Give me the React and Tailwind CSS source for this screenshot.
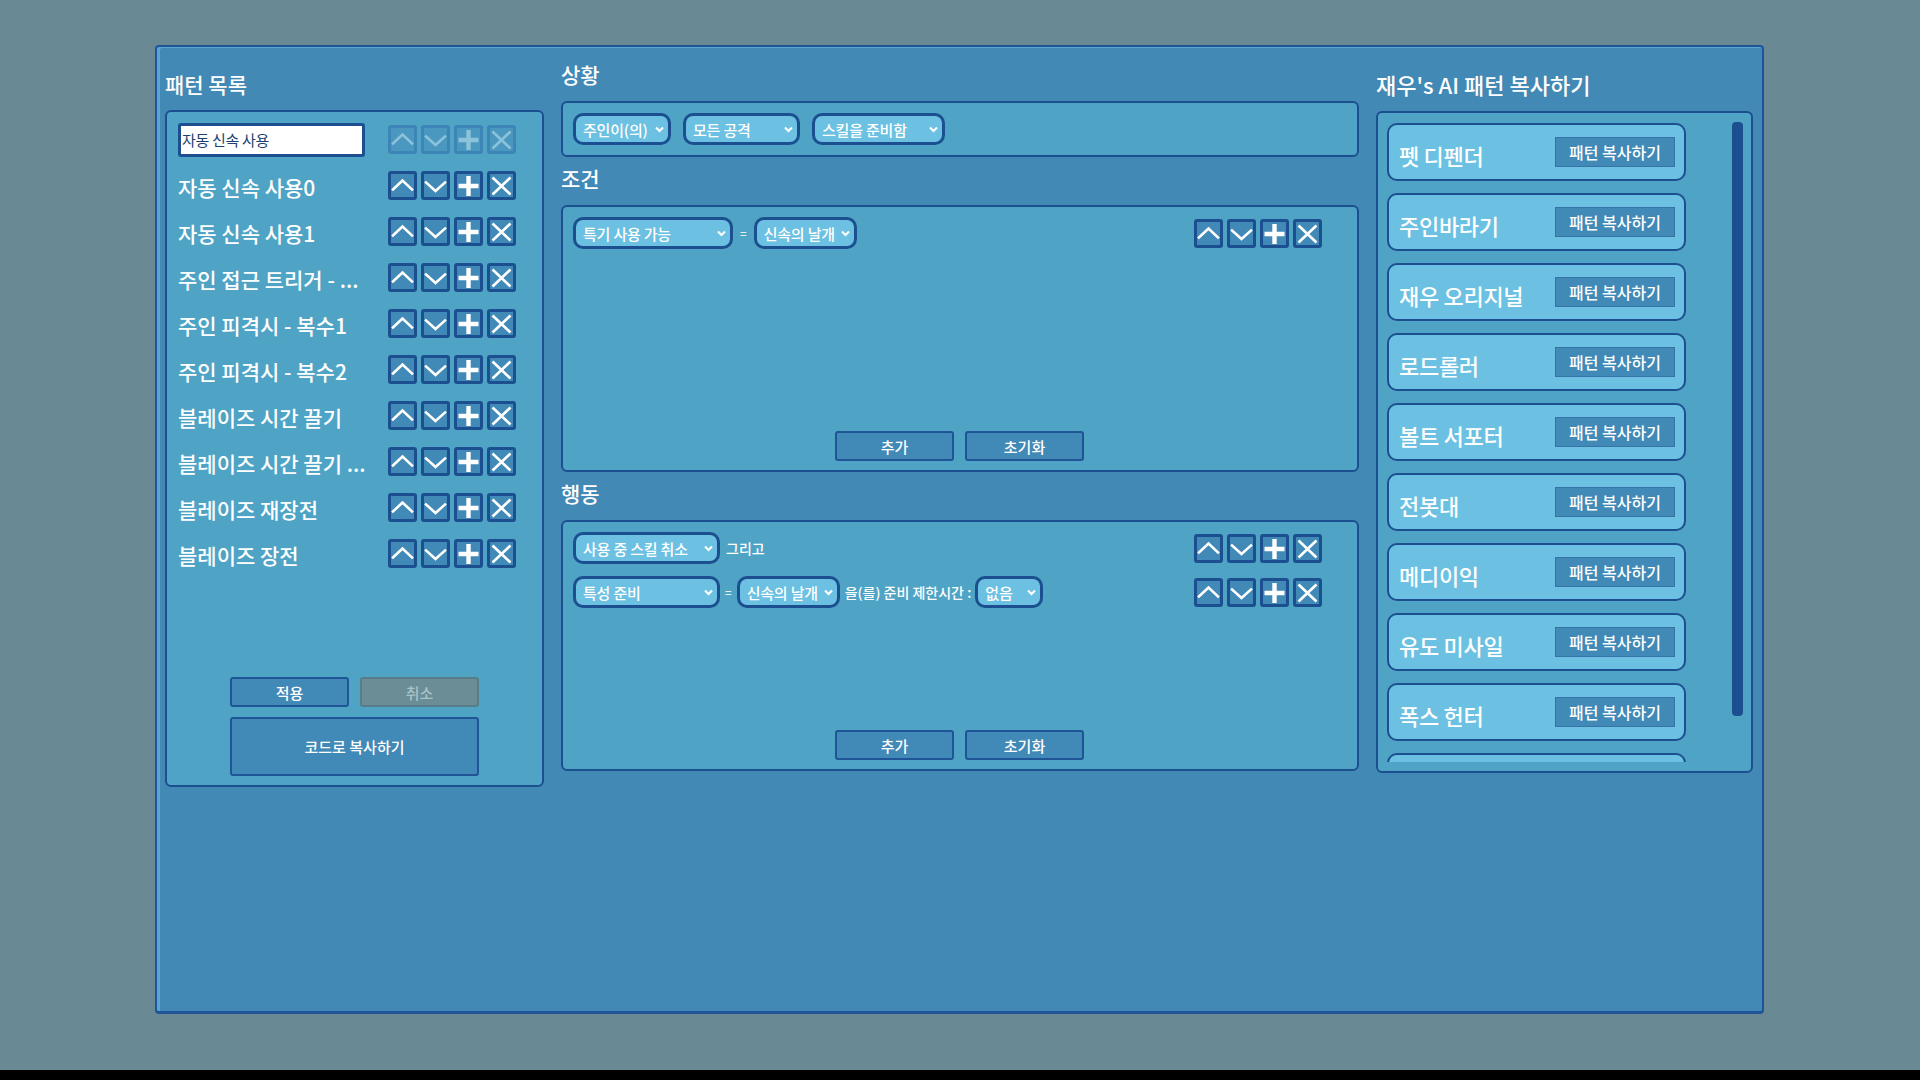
import React from "react";

function Icon({ kind, color }) {
  const c = color;
  return (
    <svg width="23" height="23" viewBox="0 0 23 23" fill="none">
      {kind === "up" && (
        <polyline points="2,15.5 11.5,6.5 21,15.5" stroke={c} strokeWidth="2.6" strokeLinecap="square" fill="none" />
      )}
      {kind === "down" && (
        <polyline points="2,8.5 11.5,17 21,8.5" stroke={c} strokeWidth="2.6" strokeLinecap="square" fill="none" />
      )}
      {kind === "plus" && (
        <path d="M11.5 2 V22 M1.5 12 H21.5" stroke={c} strokeWidth="4.4" />
      )}
      {kind === "x" && (
        <path d="M2.5 3.5 L20.5 20.5 M20.5 3.5 L2.5 20.5" stroke={c} strokeWidth="2.6" />
      )}
    </svg>
  );
}

function IconBtn({ kind, disabled }) {
  return (
    <div
      className={
        disabled
          ? "w-[29px] h-[29px] border-[3px] border-[#3d84b7] bg-[#4a97c0] rounded-[3px] flex items-center justify-center"
          : "w-[29px] h-[29px] border-[3px] border-[#1c4f8f] bg-[#4189b6] rounded-[3px] flex items-center justify-center"
      }
    >
      <Icon kind={kind} color={disabled ? "#8cc3da" : "#ffffff"} />
    </div>
  );
}

function BtnGroup({ disabled }) {
  return (
    <div className="flex gap-[4px]">
      <IconBtn kind="up" disabled={disabled} />
      <IconBtn kind="down" disabled={disabled} />
      <IconBtn kind="plus" disabled={disabled} />
      <IconBtn kind="x" disabled={disabled} />
    </div>
  );
}

function Chevron() {
  return (
    <svg width="9" height="7" viewBox="0 0 9 7" fill="none">
      <polyline points="1,1.5 4.5,5 8,1.5" stroke="#ffffff" strokeWidth="2" fill="none" />
    </svg>
  );
}

function Select({ label, w }) {
  return (
    <div
      className="h-[32px] border-[3px] border-[#1c4f8f] rounded-[10px] bg-[#6cc1e2] flex items-center justify-between pl-[7px] pr-[4px] shrink-0"
      style={{ width: w }}
    >
      <span className="text-white text-[15px] font-medium tracking-[-0.2px] leading-none whitespace-nowrap">{label}</span>
      <Chevron />
    </div>
  );
}

function FlatBtn({ label, w = 119, h = 30 }) {
  return (
    <div
      className="border-2 border-[#1f5596] rounded-[3px] bg-[#4189b6] flex items-center justify-center text-white text-[15px] font-medium leading-none"
      style={{ width: w, height: h }}
    >
      {label}
    </div>
  );
}

const listItems = [
  "자동 신속 사용0",
  "자동 신속 사용1",
  "주인 접근 트리거 - ...",
  "주인 피격시 - 복수1",
  "주인 피격시 - 복수2",
  "블레이즈 시간 끌기",
  "블레이즈 시간 끌기 ...",
  "블레이즈 재장전",
  "블레이즈 장전",
];

const cards = [
  "펫 디펜더",
  "주인바라기",
  "재우 오리지널",
  "로드롤러",
  "볼트 서포터",
  "전봇대",
  "메디이익",
  "유도 미사일",
  "폭스 헌터",
];

function Title({ children, size = "text-[21px]" }) {
  return (
    <div className={"h-[28px] flex items-center text-white font-medium leading-none whitespace-nowrap -translate-y-[2px] " + size}>
      {children}
    </div>
  );
}

export default function App() {
  return (
    <div className="w-[1920px] h-[1080px] bg-[#698a94] flex flex-col font-['Noto_Sans_CJK_KR',sans-serif] overflow-hidden">
      <div className="flex-1 pt-[45px] pl-[155px]">
        <div className="w-[1609px] h-[969px] bg-[#4289b5] border-2 border-b-[3px] border-[#1f5596] rounded-[4px] shadow-[inset_3px_1px_0_#5aa6d0] flex items-start">
          {/* Left column */}
          <div className="ml-[8px] w-[379px] pt-[25px] flex flex-col">
            <Title>패턴 목록</Title>
            <div className="mt-[10px] h-[677px] bg-[#4fa4c6] border-2 border-[#1c4f8f] rounded-[6px] flex flex-col pt-[13px] pl-[11px] pb-[9px]">
              <div className="flex flex-col gap-[17px]">
                <div className="flex items-center h-[29px]">
                  <div className="w-[187px] h-[34px] bg-white border-[3px] border-[#1c4f8f] rounded-[3px] flex items-center pl-[1px] text-[15px] tracking-[-0.3px] text-[#1c3f6f] leading-none">
                    자동 신속 사용
                  </div>
                  <div className="ml-[23px]">
                    <BtnGroup disabled />
                  </div>
                </div>
                {listItems.map((t) => (
                  <div key={t} className="flex items-center h-[29px]">
                    <div className="w-[210px] text-white text-[21px] font-medium leading-none whitespace-nowrap pt-[3px]">
                      {t}
                    </div>
                    <BtnGroup />
                  </div>
                ))}
              </div>
              <div className="mt-auto flex flex-col items-center pr-[11px] gap-[10px]">
                <div className="flex gap-[11px]">
                  <FlatBtn label="적용" />
                  <div className="w-[119px] h-[30px] border-2 border-[#587d88] rounded-[3px] bg-[#6a8d96] flex items-center justify-center text-[#a9c3ca] text-[15px] font-medium leading-none">
                    취소
                  </div>
                </div>
                <FlatBtn label="코드로 복사하기" w={249} h={59} />
              </div>
            </div>
          </div>

          {/* Middle column */}
          <div className="ml-[17px] w-[798px] pt-[15px] flex flex-col">
            <Title>상황</Title>
            <div className="mt-[11px] h-[56px] bg-[#4fa4c6] border-2 border-[#1c4f8f] rounded-[6px] flex items-start gap-[12px] pt-[10px] pl-[10px]">
              <Select label="주인이(의)" w={98} />
              <Select label="모든 공격" w={117} />
              <Select label="스킬을 준비함" w={133} />
            </div>
            <div className="mt-[9px]">
              <Title>조건</Title>
            </div>
            <div className="mt-[11px] h-[267px] bg-[#4fa4c6] border-2 border-[#1c4f8f] rounded-[6px] flex flex-col pt-[10px] pl-[10px] pr-[35px] pb-[9px]">
              <div className="flex items-center h-[32px]">
                <Select label="특기 사용 가능" w={160} />
                <span className="mx-[7px] text-white text-[12px] leading-none">=</span>
                <Select label="신속의 날개" w={103} />
                <div className="ml-auto">
                  <BtnGroup />
                </div>
              </div>
              <div className="mt-auto flex justify-center gap-[11px] translate-x-[12px]">
                <FlatBtn label="추가" />
                <FlatBtn label="초기화" />
              </div>
            </div>
            <div className="mt-[9px]">
              <Title>행동</Title>
            </div>
            <div className="mt-[11px] h-[251px] bg-[#4fa4c6] border-2 border-[#1c4f8f] rounded-[6px] flex flex-col pt-[10px] pl-[10px] pr-[35px] pb-[9px]">
              <div className="flex flex-col gap-[12px]">
                <div className="flex items-center h-[32px]">
                  <Select label="사용 중 스킬 취소" w={147} />
                  <span className="ml-[6px] text-white text-[14px] font-medium leading-none">그리고</span>
                  <div className="ml-auto">
                    <BtnGroup />
                  </div>
                </div>
                <div className="flex items-center h-[32px]">
                  <Select label="특성 준비" w={147} />
                  <span className="mx-[5px] text-white text-[12px] leading-none">=</span>
                  <Select label="신속의 날개" w={103} />
                  <span className="ml-[5px] mr-[4px] text-white text-[14px] font-medium leading-none whitespace-nowrap">
                    을(를) 준비 제한시간 :
                  </span>
                  <Select label="없음" w={68} />
                  <div className="ml-auto">
                    <BtnGroup />
                  </div>
                </div>
              </div>
              <div className="mt-auto flex justify-center gap-[11px] translate-x-[12px]">
                <FlatBtn label="추가" />
                <FlatBtn label="초기화" />
              </div>
            </div>
          </div>

          {/* Right column */}
          <div className="ml-[17px] w-[377px] pt-[25px] flex flex-col">
            <Title size="text-[22px]">재우's AI 패턴 복사하기</Title>
            <div className="mt-[11px] h-[662px] bg-[#4fa4c6] border-2 border-[#1c4f8f] rounded-[6px] flex pt-[9px] pl-[9px] pr-[8px] pb-[9px]">
              <div className="w-[299px] h-full overflow-hidden">
                <div className="flex flex-col gap-[12px] pt-[1px]">
                  {cards.map((c) => (
                    <div
                      key={c}
                      className="h-[58px] shrink-0 bg-[#6cc1e2] border-2 border-[#1c4f8f] rounded-[10px] flex items-center justify-between pl-[10px] pr-[9px]"
                    >
                      <span className="text-white text-[22px] font-medium tracking-[-0.3px] leading-none pt-[6px] whitespace-nowrap">{c}</span>
                      <div className="w-[120px] h-[30px] bg-[#4189b6] border border-[#3674a8] flex items-center justify-center text-white text-[16px] font-medium leading-none">
                        패턴 복사하기
                      </div>
                    </div>
                  ))}
                  <div className="h-[58px] shrink-0 bg-[#6cc1e2] border-2 border-[#1c4f8f] rounded-[10px]" />
                </div>
              </div>
              <div className="ml-auto w-[11px] h-[594px] bg-[#1c4f8f] rounded-[4px]" />
            </div>
          </div>
        </div>
      </div>
      <div className="h-[10px] bg-black" />
    </div>
  );
}
